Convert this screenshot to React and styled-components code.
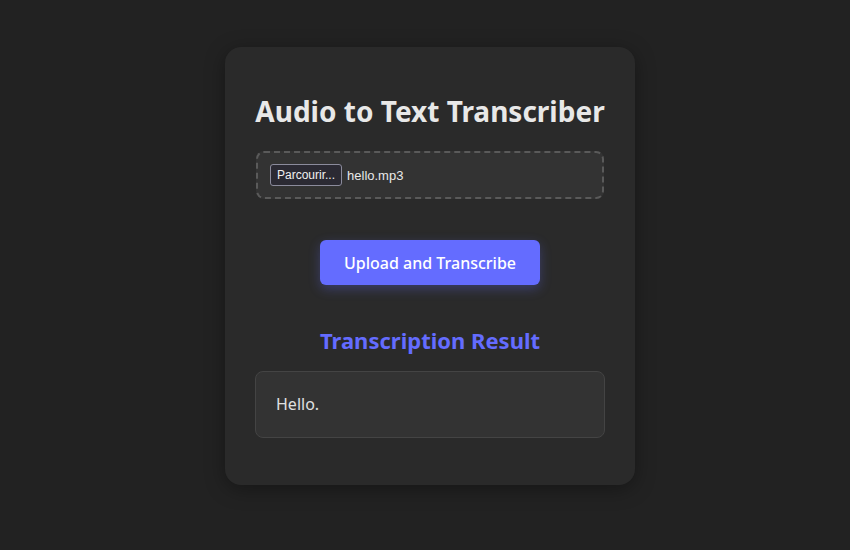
import React from "react";
import styled, { createGlobalStyle } from "styled-components";

const GlobalStyle = createGlobalStyle`
  html, body {
    margin: 0;
    padding: 0;
    background: #222222;
    font-family: "Noto Sans", "Open Sans", sans-serif;
    color: #e6e6e6;
  }
`;

const Page = styled.div`
  min-height: 550px;
  display: flex;
  justify-content: center;
  align-items: flex-start;
  padding: 47px 0 0 10px;
  box-sizing: border-box;
`;

const Card = styled.div`
  width: 410px;
  box-sizing: border-box;
  padding: 45px 30px 47px;
  background: #2a2a2a;
  border-radius: 16px;
  box-shadow: 0 4px 20px rgba(0, 0, 0, 0.35);
  display: flex;
  flex-direction: column;
  align-items: stretch;
`;

const Title = styled.h1`
  margin: 0;
  font-size: 28px;
  font-weight: 700;
  line-height: 38px;
  text-align: center;
  color: #e8e8e8;
  white-space: nowrap;
`;

const DropZone = styled.div`
  margin: 21px 1px 0;
  padding: 11px 12px;
  border: 2px dashed #5a5a5a;
  border-radius: 8px;
  background: #333333;
  display: flex;
  align-items: center;
  gap: 5px;
  font-family: "Liberation Sans", Arial, sans-serif;
  font-size: 13px;
`;

const BrowseButton = styled.span`
  display: inline-flex;
  align-items: center;
  height: 22px;
  box-sizing: border-box;
  padding: 0 6px;
  border: 1px solid #8b8b9c;
  border-radius: 3px;
  background: #2b2a33;
  color: #f0f0f0;
  font-size: 12px;
`;

const FileName = styled.span`
  color: #e8e8e8;
`;

const UploadButton = styled.button`
  align-self: center;
  margin-top: 41px;
  width: 220px;
  height: 45px;
  border: none;
  border-radius: 6px;
  background: #646cff;
  color: #ffffff;
  font-family: "Noto Sans", "Open Sans", sans-serif;
  font-size: 16px;
  font-weight: 500;
  cursor: pointer;
  box-shadow: 0 4px 12px rgba(100, 108, 255, 0.3);
`;

const ResultTitle = styled.h2`
  margin: 40px 0 0;
  font-size: 22px;
  font-weight: 700;
  line-height: 30px;
  text-align: center;
  color: #646cff;
`;

const ResultBox = styled.div`
  margin-top: 16px;
  padding: 21px 20px;
  border: 1px solid #444444;
  border-radius: 8px;
  background: #333333;
  font-size: 16px;
  line-height: 23px;
  color: #e0e0e0;
`;

export default function App() {
  return (
    <>
      <GlobalStyle />
      <Page>
        <Card>
          <Title>Audio to Text Transcriber</Title>
          <DropZone>
            <BrowseButton>Parcourir...</BrowseButton>
            <FileName>hello.mp3</FileName>
          </DropZone>
          <UploadButton>Upload and Transcribe</UploadButton>
          <ResultTitle>Transcription Result</ResultTitle>
          <ResultBox>Hello.</ResultBox>
        </Card>
      </Page>
    </>
  );
}
